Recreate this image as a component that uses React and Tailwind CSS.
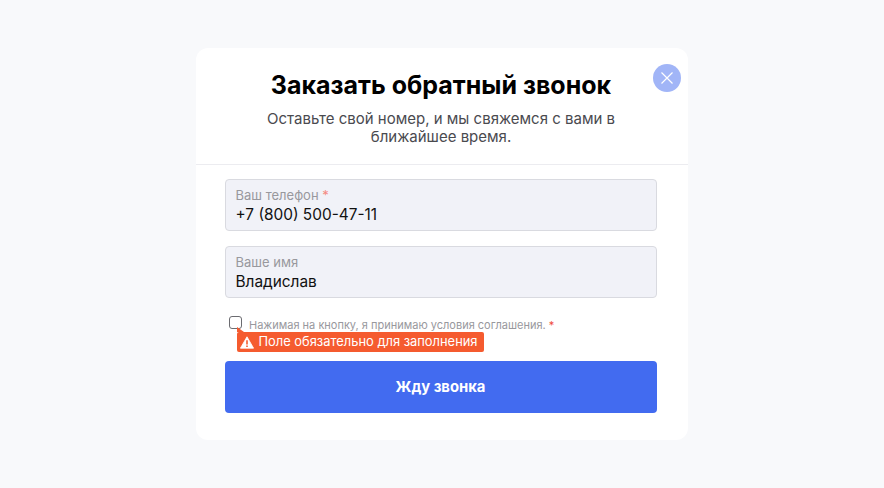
export default function App() {
  return (
    <div className="w-[884px] h-[488px] bg-[#f8f9fb] flex items-start justify-center pt-12 font-['Inter',sans-serif] overflow-hidden">
      <div className="relative w-[492px] h-[392px] bg-white rounded-xl">
        <button className="absolute right-[7px] top-4 w-7 h-7 rounded-full bg-[#a1b5f7] flex items-center justify-center">
          <svg width="14" height="14" viewBox="0 0 14 14" fill="none" stroke="#fff" strokeWidth="1.2">
            <path d="M1.5 1.5L12.5 12.5M12.5 1.5L1.5 12.5" />
          </svg>
        </button>
        <div className="h-[117px] border-b border-[#ececf0] flex flex-col items-center pt-[21px]">
          <h2 className="-translate-x-px text-[25px] leading-[32px] font-bold text-black">Заказать обратный звонок</h2>
          <p className="mt-[9px] w-[400px] -translate-x-px text-center text-[15px] leading-[18px] text-[#4a4a4f]">
            Оставьте свой номер, и мы свяжемся с вами в ближайшее время.
          </p>
        </div>
        <div className="pl-[28.5px] pr-[31.5px] pt-[14px] flex flex-col">
          <div className="h-[52px] bg-[#f1f2f8] border border-[#d9dae0] rounded flex flex-col pl-[10px] pt-[7px]">
            <div className="text-[13px] leading-[16px] text-[#98989d]">
              Ваш телефон <span className="text-[#f58a80]">*</span>
            </div>
            <div className="mt-[2px] text-[15.4px] leading-[20px] text-[#111]">+7 (800) 500-47-11</div>
          </div>
          <div className="mt-[15px] h-[52px] bg-[#f1f2f8] border border-[#d9dae0] rounded flex flex-col pl-[10px] pt-[7px]">
            <div className="text-[13px] leading-[16px] text-[#98989d]">Ваше имя</div>
            <div className="mt-[2px] text-[15.4px] leading-[20px] text-[#111]">Владислав</div>
          </div>
          <div className="relative h-[63px]">
            <div className="flex items-start pl-[4px] pt-[18px]">
              <div className="w-[13px] h-[13px] border-[1.5px] border-[#6b6b70] rounded-[3px] bg-white" />
              <div className="ml-[7.5px] mt-[2px] text-[11px] leading-[14px] text-[#98989d]">
                Нажимая на кнопку, я принимаю условия соглашения. <span className="text-[#f04b3a]">*</span>
              </div>
            </div>
            <div className="absolute left-[12px] top-[34px] h-5 w-[247px] bg-[#f55b2f] rounded-[2px] flex items-center pl-[3px] text-[12.9px] text-white">
              <span className="absolute left-0 -top-[5px] w-0 h-0 border-l-[7px] border-l-[#f55b2f] border-t-[5px] border-t-transparent" />
              <svg width="14" height="13" viewBox="0 0 14 13" className="shrink-0">
                <path d="M7 0.8L13.6 12.2H0.4Z" fill="#fff" stroke="#fff" strokeLinejoin="round" strokeWidth="0.8" />
                <path d="M6.2 4.3H7.8V8.6H6.2ZM6.2 9.6H7.8V11.1H6.2Z" fill="#f55b2f" />
              </svg>
              <span className="ml-[5px]">Поле обязательно для заполнения</span>
            </div>
          </div>
          <button className="h-[52px] bg-[#426bf0] rounded text-white font-bold text-[14.8px]">Жду звонка</button>
        </div>
      </div>
    </div>
  );
}
